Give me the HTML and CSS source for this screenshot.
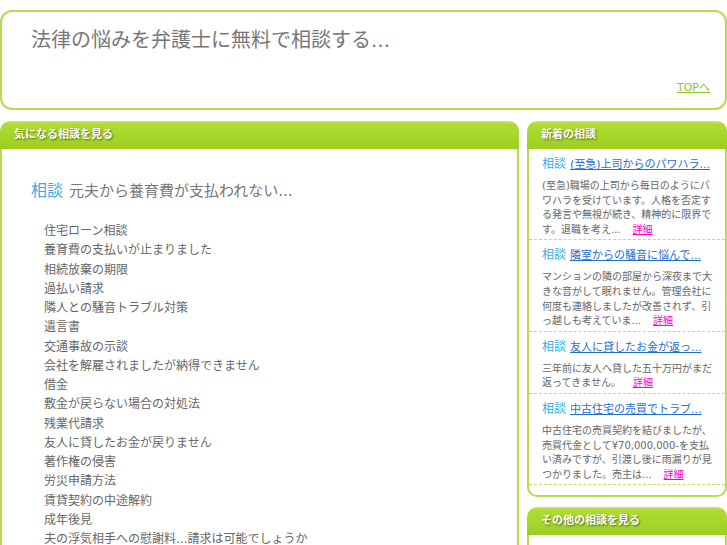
FILE: index.html
```html
<!DOCTYPE html>
<html lang="ja">
<head>
    <meta charset="UTF-8">
    <meta name="viewport" content="width=device-width, initial-scale=1.0">
    <title>法律の悩み相談</title>
    <link rel="stylesheet" href="styles.css">
</head>
<body>
    <!-- Header -->
    <div class="header">
        <h1 class="site-title">法律の悩みを弁護士に無料で相談する...</h1>
        <div class="top-link"><a href="#">TOPへ</a></div>
    </div>

    <div class="columns">
        <!-- Main column -->
        <div class="panel">
            <h2 class="panel-head">気になる相談を見る</h2>
            <div class="panel-body main-body">
                <h3 class="topic-title"><span class="label">相談</span>元夫から養育費が支払われない...</h3>
                <ul class="topic-list">
                    <li>住宅ローン相談</li>
                    <li>養育費の支払いが止まりました</li>
                    <li>相続放棄の期限</li>
                    <li>過払い請求</li>
                    <li>隣人との騒音トラブル対策</li>
                    <li>遺言書</li>
                    <li>交通事故の示談</li>
                    <li>会社を解雇されましたが納得できません</li>
                    <li>借金</li>
                    <li>敷金が戻らない場合の対処法</li>
                    <li>残業代請求</li>
                    <li>友人に貸したお金が戻りません</li>
                    <li>著作権の侵害</li>
                    <li>労災申請方法</li>
                    <li>賃貸契約の中途解約</li>
                    <li>成年後見</li>
                    <li>夫の浮気相手への慰謝料...請求は可能でしょうか</li>
                    <li>離婚協議書の作り方</li>
                </ul>
            </div>
        </div>

        <!-- Side column -->
        <div class="side-col">
            <div class="panel">
                <h2 class="panel-head">新着の相談</h2>
                <div class="panel-body side-body">
                    <div class="side-item">
                        <div class="side-title"><span class="label">相談</span><a href="#">(至急)上司からのパワハラ...</a></div>
                        <p class="side-text">(至急)職場の上司から毎日のようにパワハラを受けています。人格を否定する発言や無視が続き、精神的に限界です。退職を考え...<a class="more" href="#">詳細</a></p>
                    </div>
                    <div class="side-item">
                        <div class="side-title"><span class="label">相談</span><a href="#">隣室からの騒音に悩んで...</a></div>
                        <p class="side-text">マンションの隣の部屋から深夜まで大きな音がして眠れません。管理会社に何度も連絡しましたが改善されず、引っ越しも考えていま...<a class="more" href="#">詳細</a></p>
                    </div>
                    <div class="side-item">
                        <div class="side-title"><span class="label">相談</span><a href="#">友人に貸したお金が返っ...</a></div>
                        <p class="side-text">三年前に友人へ貸した五十万円がまだ返ってきません。<a class="more" href="#">詳細</a></p>
                    </div>
                    <div class="side-item">
                        <div class="side-title"><span class="label">相談</span><a href="#">中古住宅の売買でトラブ...</a></div>
                        <p class="side-text">中古住宅の売買契約を結びましたが、売買代金として¥70,000,000-を支払い済みですが、引渡し後に雨漏りが見つかりました。売主は...<a class="more" href="#">詳細</a></p>
                    </div>
                </div>
            </div>

            <div class="panel other-panel">
                <h2 class="panel-head">その他の相談を見る</h2>
                <div class="panel-body other-body"></div>
            </div>
        </div>
    </div>
</body>
</html>
```

FILE: styles.css
```css
/* Base */
body {
    margin: 0;
    padding-top: 10px;
    font-family: "DejaVu Sans", "Noto Sans CJK JP", sans-serif;
    color: #666;
    background: #fff;
}

/* Header */
.header {
    height: 100px;
    box-sizing: border-box;
    border: 2px solid #b5dc50;
    border-radius: 12px;
    padding: 16px 15px 0 29px;
}

.site-title {
    margin: 0;
    font-size: 20px;
    line-height: 24px;
    font-weight: normal;
    color: #777;
    white-space: nowrap;
}

.top-link {
    margin-top: 29px;
    text-align: right;
    font-size: 11px;
    line-height: 14px;
}

.top-link a {
    color: #8fc31f;
}

/* Columns */
.columns {
    display: grid;
    grid-template-columns: 519px 200px;
    gap: 8px;
    margin-top: 11px;
}

/* Panels */
.panel-head {
    margin: 0;
    height: 28px;
    line-height: 28px;
    padding-left: 14px;
    border-radius: 10px 10px 0 0;
    background: linear-gradient(#c6e964 0, #afdb33 3px, #a6d52a 60%, #9ecd20 100%);
    color: #fff;
    font-size: 11px;
    font-weight: bold;
    text-shadow: 1px 1px 2px #4f6c0c;
}

.panel-body {
    border: 2px solid #b5dc50;
    border-top: 0;
    border-radius: 0 0 10px 10px;
}

/* Main column */
.main-body {
    padding: 31px 20px 20px 29px;
}

.topic-title {
    margin: 0;
    font-size: 15px;
    line-height: 22px;
    font-weight: normal;
    color: #777;
}

.topic-title .label {
    color: #3aaee0;
    font-size: 16px;
    margin-right: 6px;
}

.topic-list {
    list-style: none;
    margin: 20px 0 0;
    padding: 0 0 0 13px;
    font-size: 12px;
    line-height: 19.25px;
}

/* Side column */
.side-body {
    padding-bottom: 10px;
}

.side-item {
    padding: 7px 11px 2px 13px;
    border-bottom: 1px dashed #bfe060;
}

.side-title {
    font-size: 11px;
    line-height: 16px;
    white-space: nowrap;
    overflow: hidden;
}

.side-title .label {
    color: #3aaee0;
    font-size: 12px;
    margin-right: 4px;
}

.side-title a {
    color: #1f6fd1;
}

.side-text {
    margin: 6px 0 0;
    font-size: 10px;
    line-height: 14.6px;
    color: #666;
}

.more {
    color: #f0c;
    margin-left: 12px;
}

.other-panel {
    margin-top: 10px;
}

.other-body {
    height: 120px;
}
```
